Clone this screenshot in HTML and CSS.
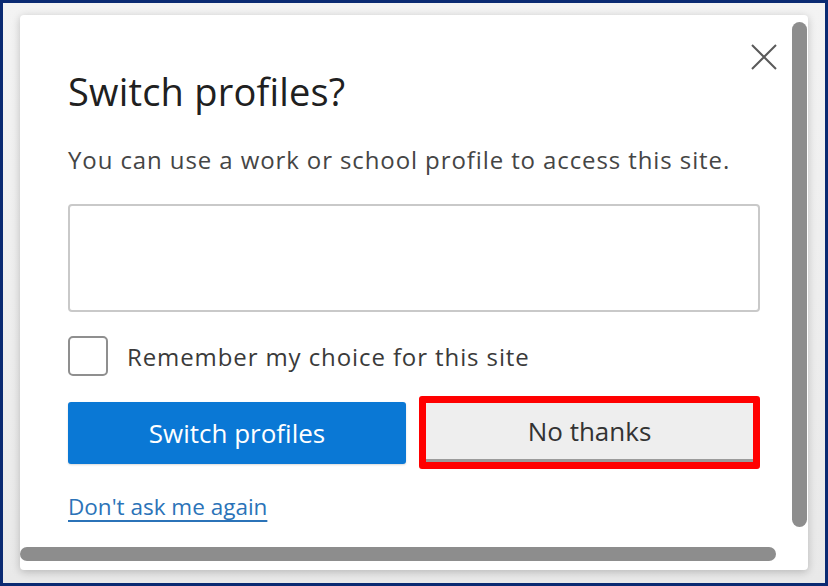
FILE: index.html
```html
<!DOCTYPE html>
<html lang="en">
<head>
<meta charset="utf-8">
<title>Switch profiles?</title>
<link rel="stylesheet" href="styles.css">
</head>
<body>
<div class="frame">
  <div class="card">
    <button class="close" aria-label="Close">
      <svg width="26" height="26" viewBox="0 0 26 26"><path d="M1 1 L25 25 M25 1 L1 25" stroke="#5a5a5a" stroke-width="2" fill="none"/></svg>
    </button>
    <div class="content">
      <h1 class="title">Switch profiles?</h1>
      <p class="subtitle">You can use a work or school profile to access this site.</p>
      <div class="profile-box"></div>
      <label class="remember"><span class="checkbox"></span><span class="remember-text">Remember my choice for this site</span></label>
      <div class="actions">
        <button class="btn primary">Switch profiles</button>
        <div class="highlight"><button class="btn secondary">No thanks</button></div>
      </div>
      <a class="link" href="#">Don't ask me again</a>
    </div>
    <div class="vscroll"></div>
    <div class="hscroll"></div>
  </div>
</div>
</body>
</html>
```

FILE: styles.css
```css
* { box-sizing: border-box; }
html, body { margin: 0; padding: 0; }
body { width: 828px; height: 586px; overflow: hidden; font-family: "Open Sans", "Noto Sans", sans-serif; }
.frame {
  width: 828px; height: 586px;
  border: 3px solid #0a2a72;
  background: linear-gradient(#f3f3f3, #e9e9e9);
  padding: 12px 0 0 17px;
}
.card {
  position: relative;
  width: 788px; height: 555px;
  background: #fff;
  border-radius: 4px;
  box-shadow: 0 2px 8px rgba(0,0,0,0.22);
}
.close {
  position: absolute; left: 731px; top: 29px;
  width: 26px; height: 26px; padding: 0; border: 0; background: none;
}
.close svg { display: block; }
.content { padding: 54px 0 0 48px; }
.title {
  margin: 0; font-weight: 400; font-size: 38px; line-height: 44px; color: #202020;
  letter-spacing: 0.2px;
}
.subtitle {
  margin: 33px 0 0; font-size: 24px; line-height: 28px; color: #454545;
  letter-spacing: 0.9px;
}
.profile-box {
  margin-top: 30px; width: 692px; height: 108px;
  border: 2px solid #c9c9c9; border-radius: 4px;
}
.remember { display: flex; align-items: center; margin-top: 24px; height: 40px; }
.checkbox {
  width: 40px; height: 40px; border: 2px solid #8f8f8f; border-radius: 5px; flex: none;
}
.remember-text { margin-left: 19px; font-size: 24px; color: #3a3a3a; letter-spacing: 0.9px; }
.actions { display: flex; align-items: center; margin-top: 20px; }
.btn {
  font-family: inherit; font-size: 26px; height: 62px; border-radius: 3px; padding: 0;
}
.primary {
  width: 338px; background: #0a78d5; color: #fff; border: 0;
  box-shadow: 0 1px 2px rgba(0,0,0,0.15);
}
.highlight {
  margin-left: 13px; border: 7px solid #ff0000; border-radius: 3px; padding: 0;
}
.secondary {
  display: block; width: 327px; height: 59px; background: #eeeeee; color: #333;
  border: 0; border-bottom: 3px solid #9b9b9b; border-radius: 0;
}
.link {
  display: inline-block; margin-top: 24px;
  font-size: 22.5px; line-height: 28px; color: #2b73b8; text-decoration: underline; text-underline-offset: 5px;
}
.vscroll {
  position: absolute; left: 772px; top: 7px; width: 15px; height: 505px;
  background: #8d8d8d; border-radius: 8px;
}
.hscroll {
  position: absolute; left: 0; top: 532px; width: 756px; height: 14px;
  background: #8d8d8d; border-radius: 7px;
}
```
